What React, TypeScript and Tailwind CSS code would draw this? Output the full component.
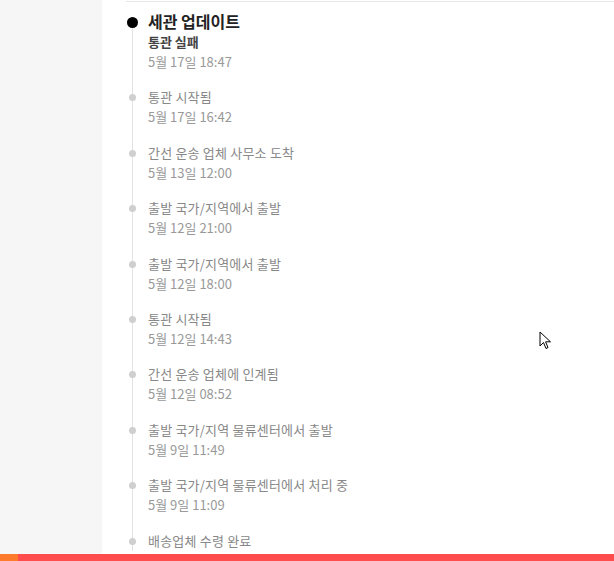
const events = [
  { label: '통관 시작됨', time: '5월 17일 16:42' },
  { label: '간선 운송 업체 사무소 도착', time: '5월 13일 12:00' },
  { label: '출발 국가/지역에서 출발', time: '5월 12일 21:00' },
  { label: '출발 국가/지역에서 출발', time: '5월 12일 18:00' },
  { label: '통관 시작됨', time: '5월 12일 14:43' },
  { label: '간선 운송 업체에 인계됨', time: '5월 12일 08:52' },
  { label: '출발 국가/지역 물류센터에서 출발', time: '5월 9일 11:49' },
  { label: '출발 국가/지역 물류센터에서 처리 중', time: '5월 9일 11:09' },
  { label: '배송업체 수령 완료', time: '' },
]

export default function App() {
  return (
    <div
      className="relative w-[614px] h-[561px] overflow-hidden bg-[#f6f6f6] flex flex-col"
      style={{ fontFamily: '"Noto Sans CJK KR", "Noto Sans", sans-serif' }}
    >
      <div className="flex flex-1 min-h-0">
        {/* left gutter */}
        <div className="w-[102px] shrink-0" />

        {/* tracking panel */}
        <div className="flex-1 bg-white pl-6 pt-[1px] overflow-hidden">
          <div className="border-t border-[#e6e6e6] relative">
            {/* timeline rail */}
            <div className="absolute left-[6px] top-[20px] bottom-0 w-px bg-[#e3e3e3]" />

            {/* latest */}
            <div className="relative pl-[22px] pt-[10px]">
              <span className="absolute left-[1px] top-[15px] w-[11px] h-[11px] rounded-full bg-black" />
              <div className="text-[16px] leading-[19px] font-bold text-[#222]">세관 업데이트</div>
              <div className="text-[13px] leading-[20px] mt-px font-bold text-[#444]">통관 실패</div>
              <div className="text-[13px] leading-[20px] text-[#999]">5월 17일 18:47</div>
            </div>

            {events.map((e, i) => (
              <div key={i} className="relative pl-[22px] mt-[15.4px]">
                <span className="absolute left-[3px] top-[7px] w-[7px] h-[7px] rounded-full bg-[#cfcfcf]" />
                <div className="text-[13px] leading-[20px] text-[#888] whitespace-nowrap tracking-[0.2px]">{e.label}</div>
                {e.time && <div className="text-[13px] leading-[20px] text-[#999]">{e.time}</div>}
              </div>
            ))}
          </div>
        </div>
      </div>

      {/* bottom bar */}
      <div className="h-[7px] shrink-0 flex">
        <div className="w-[18px] bg-[#ff7b2c]" />
        <div className="flex-1 bg-[#ff4d4d]" />
      </div>

      {/* mouse pointer */}
      <svg className="absolute left-[539px] top-[331px]" width="13" height="19" viewBox="0 0 13 19">
        <path d="M1 1 L1 15 L4.5 11.5 L7 17.5 L9 16.6 L6.6 10.8 L11.5 10.8 Z" fill="white" stroke="black" strokeWidth="1" strokeLinejoin="round" />
      </svg>
    </div>
  )
}
